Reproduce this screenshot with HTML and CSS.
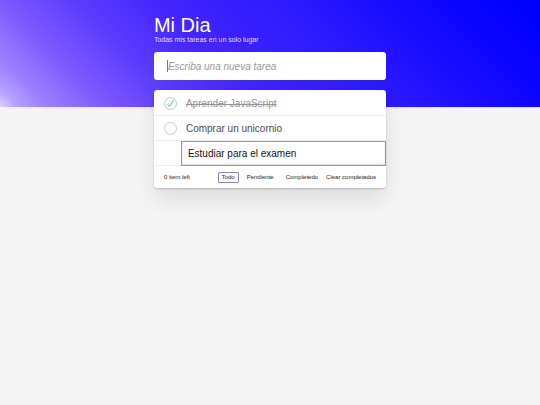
FILE: index.html
```
<!DOCTYPE html>
<html lang="es">
<head>
    <meta charset="UTF-8">
    <meta name="viewport" content="width=device-width, initial-scale=1.0">
    <title>Mi Dia</title>
    <link rel="stylesheet" href="styles.css">
</head>
<body>
    <section class="todoapp">
        <header class="header">
            <h1>Mi Dia</h1>
            <p class="subtitle">Todas mis tareas en un solo lugar</p>
            <input type="text" class="new-todo" placeholder="Escriba una nueva tarea" aria-label="Nueva tarea" autofocus>
        </header>

        <section class="main">
            <ul class="todo-list">
                <li class="completed">
                    <input type="checkbox" class="toggle" id="todo-1" checked>
                    <label for="todo-1">Aprender JavaScript</label>
                </li>
                <li>
                    <input type="checkbox" class="toggle" id="todo-2">
                    <label for="todo-2">Comprar un unicornio</label>
                </li>
                <li class="editing">
                    <input type="text" class="edit" value="Estudiar para el examen" aria-label="Editar tarea">
                </li>
            </ul>

            <footer class="footer">
                <span class="todo-count">0 item left</span>
                <ul class="filters">
                    <li><a href="#/" class="selected">Todo</a></li>
                    <li><a href="#/active">Pendiente</a></li>
                    <li><a href="#/completed">Completedo</a></li>
                </ul>
                <button type="button" class="clear-completed">Clear completados</button>
            </footer>
        </section>
    </section>
</body>
</html>
```

FILE: styles.css
```
* {
    box-sizing: border-box;
}
body {
    margin: 0;
    min-height: 100vh;
    font-family: "Liberation Sans", Arial, sans-serif;
    font-size: 10px;
    color: #4d4d4d;
    background-color: #f5f5f5;
    background-image:
        radial-gradient(circle at 0 107px, rgba(255, 255, 255, 0.5) 0, rgba(255, 255, 255, 0.1) 14px, rgba(255, 255, 255, 0) 36px),
        linear-gradient(45deg, #b8a6ff 0%, #9a7dff 8%, #7c58ff 17%, #5c3cff 28%, #4526ff 40%, #2a18ff 62%, #1409ff 80%, #0000ff 95%);
    background-repeat: no-repeat;
    background-size: 100% 107px;
}
ul {
    margin: 0;
    padding: 0;
    list-style: none;
}
.todoapp {
    width: 43%;
    min-width: 232px;
    margin: 0 auto;
    padding-top: 14px;
}
.header h1 {
    margin: 0;
    font-size: 20px;
    font-weight: normal;
    line-height: 22px;
    color: #fff;
}
.subtitle {
    margin: 0 0 8px;
    font-size: 7px;
    line-height: 8px;
    color: #e4deff;
}
.new-todo {
    display: block;
    width: 100%;
    height: 28px;
    padding: 0 14px;
    border: none;
    border-radius: 3px;
    outline: none;
    font-family: inherit;
    font-size: 10px;
    color: #4d4d4d;
    background: #fff;
}
.new-todo::placeholder {
    font-style: italic;
    color: #999;
}
/* text cursor while the box is empty */
.new-todo:placeholder-shown {
    caret-color: transparent;
    background: linear-gradient(#777, #777) 13px center / 1px 12px no-repeat #fff;
}
.main {
    margin-top: 10px;
    padding-top: 1px;
    border-radius: 3px;
    background: #fff;
    box-shadow: 0 1px 2px rgba(0, 0, 0, 0.2), 0 12px 25px rgba(0, 0, 0, 0.1);
}
.todo-list li {
    display: flex;
    align-items: center;
    height: 25px;
    padding-left: 10px;
    border-bottom: 1px solid #ededed;
}
.toggle {
    appearance: none;
    width: 13px;
    height: 13px;
    margin: 0 9px 0 0;
    border: 1px solid #ccc;
    border-radius: 50%;
}
.toggle:checked {
    border-color: #a5d6c8;
    background: url("data:image/svg+xml,%3Csvg xmlns='http://www.w3.org/2000/svg' viewBox='0 0 11 11'%3E%3Cpath d='M2.4 6l2.2 2.6 4-6.6' fill='none' stroke='%235dc2af'/%3E%3C/svg%3E") center no-repeat;
}
.completed label {
    color: #949494;
    text-decoration: line-through;
}
.todo-list .editing {
    padding-left: 27px;
}
.edit {
    flex: 1;
    min-width: 0;
    height: 25px;
    padding: 0 6px;
    border: 1px solid #999;
    outline: none;
    font-family: inherit;
    font-size: 10px;
    color: #111;
    background: #fff;
    box-shadow: inset 0 -1px 2px rgba(0, 0, 0, 0.15);
}
.footer {
    display: flex;
    align-items: center;
    height: 22px;
    padding: 0 10px;
    font-size: 6px;
    color: #222;
}
.filters {
    display: flex;
    gap: 4px;
    margin-left: auto;
}
.filters a {
    display: block;
    padding: 1px 3px;
    border: 1px solid transparent;
    border-radius: 1px;
    line-height: 7px;
    color: inherit;
    text-decoration: none;
}
.filters .selected {
    border-color: #8f84b8;
}
.clear-completed {
    margin-left: 4px;
    padding: 0;
    border: none;
    font-family: inherit;
    font-size: 6px;
    color: inherit;
    background: none;
    cursor: pointer;
}
```
